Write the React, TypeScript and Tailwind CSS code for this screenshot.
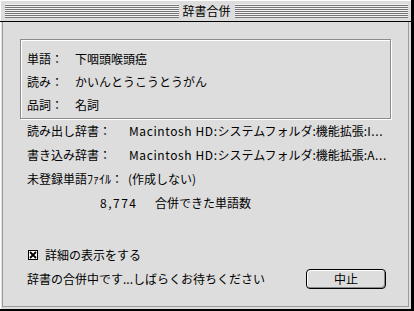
const stripes =
  "h-[14px] flex-1 bg-[image:repeating-linear-gradient(to_bottom,#f2f2f2_0px,#f2f2f2_1px,#767676_1px,#767676_2px)]";

function TitleBar() {
  return (
    <div className="h-[21px] flex items-center pl-[5px] pr-[3px] shadow-[inset_1px_1px_0_#ffffff]">
      <div className={stripes} />
      <div className="px-[4px] text-[12px] leading-none">辞書合併</div>
      <div className={stripes} />
    </div>
  );
}

function Field({ label, value, labelWidth }: { label: string; value: React.ReactNode; labelWidth: string }) {
  return (
    <div className="flex items-center h-full">
      <span className={`${labelWidth} shrink-0`}>{label}</span>
      <span className="whitespace-nowrap">{value}</span>
    </div>
  );
}

function Path({ tail }: { tail: string }) {
  return (
    <>
      <span className="tracking-[0.6px]">Macintosh HD:</span>
      システムフォルダ:機能拡張:
      <span className="tracking-[0.6px]">{tail}...</span>
    </>
  );
}

function CheckBox() {
  return (
    <svg width="10" height="10" viewBox="0 0 10 10" className="shrink-0">
      <rect x="0.5" y="0.5" width="9" height="9" fill="#ffffff" stroke="#000" />
      <path d="M2 2 L8 8 M8 2 L2 8" stroke="#000" strokeWidth="1.8" />
    </svg>
  );
}

export default function App() {
  return (
    <div className="w-[414px] h-[311px] box-border overflow-hidden flex flex-col bg-[#dddddd] border-r-[3px] border-b-[2px] border-black text-black text-[12px] leading-none font-['Noto_Sans_CJK_JP',sans-serif]">
      <TitleBar />
      <div className="flex-1 flex flex-col border-t border-black pl-[2px] pr-[2px] pb-[2px] shadow-[inset_1px_0_0_#ffffff]">
        <div className="flex-1 flex flex-col border-l border-r border-b border-[#9c9c9c]">
          {/* word info group */}
          <div className="ml-[17px] mt-[17px] w-[371px] h-[80px] box-border border border-[#8c8c8c] shadow-[inset_1px_1px_0_#ffffff,1px_1px_0_#ffffff] pl-[6px] pt-[7px]">
            <div className="h-[23px]">
              <Field label="単語：" value="下咽頭喉頭癌" labelWidth="w-[48px]" />
            </div>
            <div className="h-[23px]">
              <Field label="読み：" value="かいんとうこうとうがん" labelWidth="w-[48px]" />
            </div>
            <div className="h-[23px]">
              <Field label="品詞：" value="名詞" labelWidth="w-[48px]" />
            </div>
          </div>

          <div className="pl-[24px]">
            <div className="h-[24px]">
              <Field label="読み出し辞書：" value={<Path tail="I" />} labelWidth="w-[102px]" />
            </div>
            <div className="h-[24px]">
              <Field label="書き込み辞書：" value={<Path tail="A" />} labelWidth="w-[102px]" />
            </div>
            <div className="h-[24px]">
              <Field label="未登録単語ﾌｧｲﾙ：" value="(作成しない)" labelWidth="w-[101px]" />
            </div>
            <div className="h-[24px] flex items-center">
              <span className="ml-[73px] w-[55px] tracking-[1.5px]">8,774</span>
              <span>合併できた単語数</span>
            </div>
          </div>

          <div className="mt-[28px] h-[24px] flex items-center pl-[25px] gap-[7px]">
            <CheckBox />
            <span>詳細の表示をする</span>
          </div>

          <div className="h-[24px] flex items-center pl-[24px] pr-[22px]">
            <span>辞書の合併中です...しばらくお待ちください</span>
            <button className="ml-auto w-[80px] h-[20px] box-border border border-black rounded-[4px] bg-[#dddddd] shadow-[inset_1px_1px_0_#ffffff,inset_-1px_-1px_0_#8a8a8a] text-[12px] leading-none">
              中止
            </button>
          </div>
        </div>
      </div>
    </div>
  );
}
